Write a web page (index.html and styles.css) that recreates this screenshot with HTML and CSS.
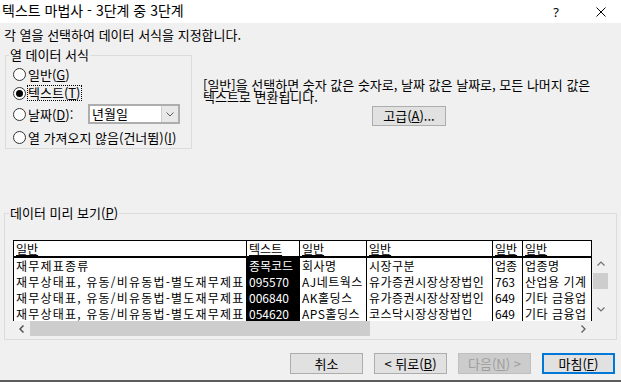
FILE: index.html
```html
<!DOCTYPE html>
<html lang="ko">
<head>
  <meta charset="UTF-8">
  <title>텍스트 마법사 - 3단계 중 3단계</title>
  <link rel="stylesheet" href="styles.css">
</head>
<body>
  <div class="window">
    <div class="titlebar">
      <span class="title">텍스트 마법사 - 3단계 중 3단계</span>
      <span class="title-btn help">?</span>
      <span class="title-btn close">
        <svg width="10" height="10" viewBox="0 0 10 10"><path d="M0.5 0.5 L9.5 9.5 M9.5 0.5 L0.5 9.5" stroke="#000" stroke-width="1" fill="none"/></svg>
      </span>
    </div>

    <div class="content">
      <p class="intro">각 열을 선택하여 데이터 서식을 지정합니다.</p>

      <div class="top-row">
        <fieldset class="group format">
          <legend>열 데이터 서식</legend>
          <div class="option opt-general"><span class="radio"></span><span>일반(<u>G</u>)</span></div>
          <div class="option opt-text"><span class="radio checked"></span><span class="focus">텍스트(<u>T</u>)</span></div>
          <div class="option opt-date">
            <span class="radio"></span><span class="date-label">날짜(<u>D</u>):</span>
            <div class="combo">
              <span class="combo-value">년월일</span>
              <span class="combo-btn">
                <svg width="8" height="5" viewBox="0 0 8 5"><path d="M0.5 0.5 L4 4 L7.5 0.5" fill="none" stroke="#606060" stroke-width="1"/></svg>
              </span>
            </div>
          </div>
          <div class="option opt-skip"><span class="radio"></span><span>열 가져오지 않음(건너뜀)(<u>I</u>)</span></div>
        </fieldset>

        <div class="info">
          <p class="info-text">[일반]을 선택하면 숫자 값은 숫자로, 날짜 값은 날짜로, 모든 나머지 값은<br>텍스트로 변환됩니다.</p>
          <button class="btn advanced">고급(<u>A</u>)...</button>
        </div>
      </div>

      <fieldset class="group preview">
        <legend>데이터 미리 보기(<u>P</u>)</legend>
        <div class="grid">
          <div class="sheet-head">
            <span class="cell c1"><u>일반</u></span>
            <span class="cell c2"><u>텍스트</u></span>
            <span class="cell c3"><u>일반</u></span>
            <span class="cell c4"><u>일반</u></span>
            <span class="cell c5"><u>일반</u></span>
            <span class="cell c6"><u>일반</u></span>
          </div>
          <div class="head-corner"></div>

          <div class="sheet-body">
            <div class="row">
              <span class="cell c1">재무제표종류</span>
              <span class="cell c2">종목코드</span>
              <span class="cell c3">회사명</span>
              <span class="cell c4">시장구분</span>
              <span class="cell c5">업종</span>
              <span class="cell c6">업종명</span>
            </div>
            <div class="row">
              <span class="cell c1">재무상태표, 유동/비유동법-별도재무제표</span>
              <span class="cell c2">095570</span>
              <span class="cell c3">AJ네트웍스</span>
              <span class="cell c4">유가증권시장상장법인</span>
              <span class="cell c5">763</span>
              <span class="cell c6">산업용 기계</span>
            </div>
            <div class="row">
              <span class="cell c1">재무상태표, 유동/비유동법-별도재무제표</span>
              <span class="cell c2">006840</span>
              <span class="cell c3">AK홀딩스</span>
              <span class="cell c4">유가증권시장상장법인</span>
              <span class="cell c5">649</span>
              <span class="cell c6">기타 금융업</span>
            </div>
            <div class="row">
              <span class="cell c1">재무상태표, 유동/비유동법-별도재무제표</span>
              <span class="cell c2">054620</span>
              <span class="cell c3">APS홀딩스</span>
              <span class="cell c4">코스닥시장상장법인</span>
              <span class="cell c5">649</span>
              <span class="cell c6">기타 금융업</span>
            </div>
          </div>

          <div class="vscroll">
            <svg class="arrow-up" width="8" height="5" viewBox="0 0 8 5"><path d="M0.5 4.5 L4 1 L7.5 4.5" fill="none" stroke="#707070" stroke-width="1.2"/></svg>
            <span class="vthumb"></span>
            <svg class="arrow-down" width="8" height="5" viewBox="0 0 8 5"><path d="M0.5 0.5 L4 4 L7.5 0.5" fill="none" stroke="#707070" stroke-width="1.2"/></svg>
          </div>

          <div class="hscroll">
            <span class="sb-btn">
              <svg width="5" height="8" viewBox="0 0 5 8"><path d="M4.5 0.5 L1 4 L4.5 7.5" fill="none" stroke="#505050" stroke-width="1.5"/></svg>
            </span>
            <span class="hthumb"></span>
            <span class="htrack"></span>
            <span class="sb-btn">
              <svg width="5" height="8" viewBox="0 0 5 8"><path d="M0.5 0.5 L4 4 L0.5 7.5" fill="none" stroke="#606060" stroke-width="1.3"/></svg>
            </span>
          </div>
          <div class="corner"></div>
        </div>
      </fieldset>

      <div class="actions">
        <button class="btn">취소</button>
        <button class="btn">&lt; 뒤로(<u>B</u>)</button>
        <button class="btn" disabled>다음(<u>N</u>) &gt;</button>
        <button class="btn primary">마침(<u>F</u>)</button>
      </div>
    </div>
  </div>
</body>
</html>
```

FILE: styles.css
```css
body {
  margin: 0;
  background: #f0f0f0;
  font-family: "Noto Sans CJK KR", "Noto Sans", sans-serif;
  font-size: 13px;
  color: #000;
}

u {
  text-underline-offset: 1px;
}

.window {
  width: 621px;
  height: 382px;
  box-sizing: border-box;
  border-bottom: 2px solid #5c5c5c;
  display: flex;
  flex-direction: column;
  overflow: hidden;
}

/* title bar */
.titlebar {
  height: 23px;
  background: #fff;
  display: flex;
  align-items: center;
  flex: none;
}

.title {
  flex: 1;
  padding-left: 2px;
  font-size: 14px;
  line-height: 16px;
  margin-top: -3px;
}

.title-btn {
  display: flex;
  justify-content: center;
  align-items: center;
}

.help {
  width: 50px;
  font-family: "Noto Sans", sans-serif;
  font-size: 13px;
}

.close {
  width: 40px;
}

/* dialog body */
.content {
  display: flex;
  flex-direction: column;
}

.intro {
  margin: 0;
  padding: 4px 0 0 4px;
  line-height: 16px;
}

.top-row {
  display: flex;
  align-items: flex-start;
}

.group {
  border: 1px solid #dcdcdc;
  margin: 0;
  min-width: 0;
}

.group legend {
  padding: 0 1px;
  margin-left: -4px;
  line-height: 14px;
}

.format {
  margin: 5px 0 0 5px;
  width: 187px;
  box-sizing: border-box;
  padding: 2px 0 0 7px;
}

.option {
  display: flex;
  align-items: center;
  height: 20px;
  white-space: nowrap;
}

.opt-text { height: 18px; }
.opt-date { height: 24px; }
.opt-skip { height: 22px; }

.radio {
  width: 13px;
  height: 13px;
  box-sizing: border-box;
  border: 1px solid #333;
  border-radius: 50%;
  background: #fff;
  margin-right: 2px;
  flex: none;
  display: flex;
  align-items: center;
  justify-content: center;
}

.radio.checked::after {
  content: "";
  width: 7px;
  height: 7px;
  border-radius: 50%;
  background: #000;
}

.focus {
  border: 1px dotted #000;
  margin-left: -1px;
  line-height: 14px;
  padding-right: 1px;
}

.date-label {
  width: 58px;
}

.combo {
  width: 92px;
  height: 20px;
  box-sizing: border-box;
  border: 2px solid #adadad;
  background: #fff;
  display: flex;
  margin-left: 2px;
}

.combo-value {
  flex: 1;
  padding-left: 2px;
  line-height: 16px;
}

.combo-btn {
  width: 16px;
  background: #e8e8e8;
  border-left: 1px solid #cfcfcf;
  display: flex;
  align-items: center;
  justify-content: center;
}

.info {
  margin-left: 11px;
  padding-top: 36px;
}

.info-text {
  margin: 0;
  line-height: 12px;
  white-space: nowrap;
}

.btn {
  font: inherit;
  color: #000;
  background: #e1e1e1;
  border: 1px solid #adadad;
  padding: 0;
  width: 73px;
  height: 21px;
  box-sizing: border-box;
  line-height: 16px;
}

.btn:disabled {
  background: #cccccc;
  border-color: #bfbfbf;
  color: #9d9d9d;
}

.btn.primary {
  border: 2px solid #0078d7;
}

.advanced {
  display: block;
  margin: 3px 0 0 169px;
  width: 74px;
  height: 20px;
}

/* preview */
.preview {
  margin: 57px 0 0 4px;
  width: 613px;
  box-sizing: border-box;
  padding: 20px 7px 3px 8px;
}

.grid {
  display: grid;
  grid-template-columns: 579px 17px;
  grid-template-rows: 18px 63px 15px;
  font-size: 12px;
}

.sheet-head {
  display: flex;
  background: #fff;
  border-top: 1px solid #000;
  border-bottom: 2px solid #000;
  border-left: 1px solid #000;
  line-height: 15px;
}

.sheet-body {
  background: #fff;
  border-left: 1px solid #000;
  overflow: hidden;
}

.row {
  display: flex;
  height: 16px;
  line-height: 16px;
}

.cell {
  flex: none;
  box-sizing: border-box;
  border-right: 1px solid #000;
  padding-left: 2px;
  white-space: nowrap;
  overflow: hidden;
}

.c1 { width: 233px; }
.c2 { width: 53px; }
.c3 { width: 67px; }
.c4 { width: 126px; }
.c5 { width: 30px; }
.c6 { width: 69px; }

.row .c1 { letter-spacing: 1.2px; }
.row .c3,
.row .c4,
.row .c6 { letter-spacing: 0.5px; }

.row .c2 {
  background: #000;
  color: #fff;
}

.vscroll {
  display: flex;
  flex-direction: column;
  align-items: center;
}

.arrow-up {
  margin-top: 3px;
}

.vthumb {
  width: 15px;
  height: 16px;
  margin-top: 7px;
  background: #cdcdcd;
}

.arrow-down {
  margin-top: auto;
  margin-bottom: 9px;
}

.hscroll {
  display: flex;
}

.sb-btn {
  width: 17px;
  display: flex;
  align-items: center;
  justify-content: center;
}

.hthumb {
  width: 340px;
  background: #cdcdcd;
}

.htrack {
  flex: 1;
}

.actions {
  display: flex;
  justify-content: flex-end;
  gap: 11px;
  margin-top: 13px;
  padding-right: 6px;
}
```
